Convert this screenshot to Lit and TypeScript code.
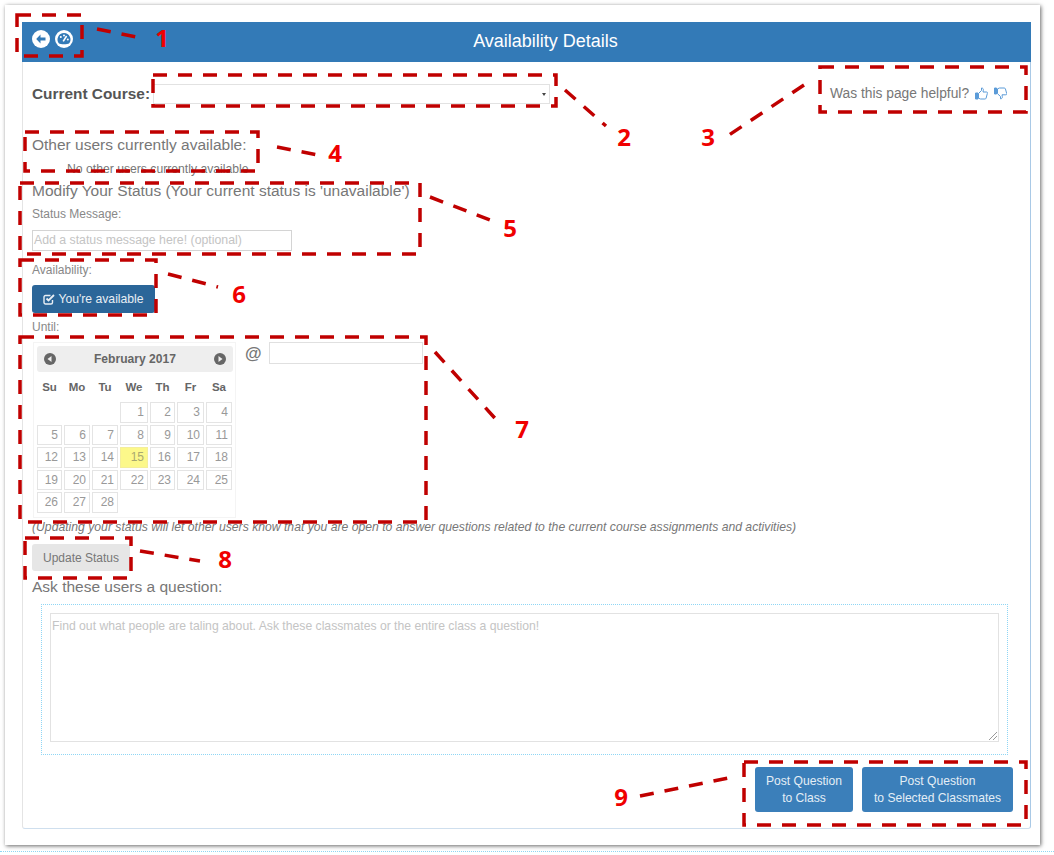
import { LitElement, html, css, svg } from 'lit';
import { customElement } from 'lit/decorators.js';

const BOXES = [
  [17, 15, 65, 41],
  [153, 75, 403, 31],
  [820, 67, 206, 45],
  [25, 132, 233, 39],
  [20, 183, 400, 71],
  [20, 260, 136, 55],
  [20, 337, 406, 185],
  [25, 538, 106, 40],
  [744, 762, 282, 63],
];

const LINES = [
  [97, 29, 136, 37],
  [565, 90, 606, 126],
  [804, 85, 726, 137],
  [277, 147, 318, 155],
  [430, 197, 490, 220],
  [168, 274, 218, 287],
  [435, 352, 502, 426],
  [140, 551, 200, 561],
  [640, 796, 728, 778],
];

const NUMBERS = [
  ['1', 162, 47],
  ['2', 624, 146],
  ['3', 708, 146],
  ['4', 335, 162],
  ['5', 510, 237],
  ['6', 239, 303],
  ['7', 522, 438],
  ['8', 225, 568],
  ['9', 621, 806],
];

// blank cells at the start of the month, then 1..28
const DAYS: number[] = [0, 0, 0, ...Array.from({ length: 28 }, (_, i) => i + 1)];
const WEEKDAYS = ['Su', 'Mo', 'Tu', 'We', 'Th', 'Fr', 'Sa'];

@customElement('app-root')
export class AppRoot extends LitElement {
  static styles = css`
    :host {
      display: block;
      position: relative;
      width: 1054px;
      height: 855px;
      background: #fff;
      overflow: hidden;
      font-family: 'Liberation Sans', Arial, sans-serif;
      color: #777;
    }
    .frame {
      box-sizing: border-box;
      position: relative;
      margin: 5px 0 0 5px;
      width: 1035px;
      height: 840px;
      padding: 17px 9px 16px 17px;
      background: #fff;
      box-shadow: 1px 1px 4px rgba(0, 0, 0, 0.6);
    }
    .rule {
      position: absolute;
      left: -5px;
      right: -14px;
      top: 846px;
      border-top: 1px dotted #8fd6f5;
    }
    .panel {
      box-sizing: border-box;
      height: 100%;
      border: 1px solid #a9c9e6;
      border-top: 0;
      border-left-color: #e4e4e4;
      border-bottom-color: #cfdfee;
      border-radius: 0 0 3px 3px;
    }
    header {
      box-sizing: border-box;
      display: flex;
      align-items: center;
      height: 40px;
      margin: 0 -1px;
      padding: 0 0 6px 10px;
      background: #337ab7;
      position: relative;
    }
    header .icons {
      display: flex;
      gap: 5px;
    }
    header h1 {
      position: absolute;
      left: 38px;
      right: 0;
      top: 9px;
      margin: 0;
      text-align: center;
      font-size: 18px;
      line-height: 20px;
      font-weight: 400;
      color: #fff;
    }
    .body {
      padding: 0 18px 0 9px;
    }
    .top {
      display: flex;
      justify-content: space-between;
      height: 74px;
    }
    .course {
      display: flex;
      align-items: center;
      height: 19px;
      margin-top: 22px;
      gap: 3px;
    }
    .course b {
      font-size: 15.4px;
      color: #555;
    }
    .select {
      box-sizing: border-box;
      position: relative;
      width: 397px;
      height: 20px;
      border: 1px solid #e2e2e2;
    }
    .select::after {
      content: '';
      position: absolute;
      right: 3px;
      top: 8px;
      border: 2px solid transparent;
      border-top: 3px solid #444;
      border-bottom: 0;
    }
    .helpful {
      box-sizing: border-box;
      display: flex;
      align-items: center;
      gap: 5px;
      height: 22px;
      margin: 20px 1px 0 0;
      font-size: 13.8px;
      color: #777;
      width: 181px;
    }
    .helpful svg {
      margin-left: 1px;
      flex: none;
    }
    h2 {
      margin: 0;
      font-size: 15.5px;
      line-height: 18px;
      font-weight: 400;
      color: #777;
    }
    .none {
      font-size: 12.2px;
      line-height: 14px;
      margin: 8px 0 6px 35px;
    }
    .label {
      font-size: 12px;
      line-height: 14px;
      color: #888;
    }
    .status-label {
      margin-top: 7px;
    }
    .status {
      box-sizing: border-box;
      width: 260px;
      height: 21px;
      margin: 9px 0 12px;
      padding-left: 1px;
      border: 1px solid #d4d4d4;
      font-size: 12.3px;
      line-height: 19px;
      color: #c4c4c4;
    }
    .avail {
      display: flex;
      align-items: center;
      justify-content: center;
      gap: 3px;
      box-sizing: border-box;
      width: 123px;
      height: 28px;
      margin: 8px 0 7px;
      border-radius: 3px;
      background: #2b6699;
      color: #e8eef4;
      font-size: 12.2px;
    }
    .until {
      display: flex;
      align-items: flex-start;
      margin-top: 8px;
    }
    .calendar {
      box-sizing: border-box;
      width: 203px;
      height: 176px;
      margin: 0 0 0 1px;
      padding: 3px 0 0 3px;
      border: 1px solid #f4f4f4;
      flex: none;
    }
    .cal-head {
      display: flex;
      align-items: center;
      justify-content: space-between;
      width: 196px;
      height: 26px;
      padding: 0 7px;
      box-sizing: border-box;
      background: #eee;
      border-radius: 3px;
      font-size: 12.1px;
      font-weight: 700;
      color: #666;
    }
    .grid {
      display: grid;
      grid-template-columns: 25px 26px 26px 28px 25px 27px 26px;
      grid-auto-rows: 20.6px;
      column-gap: 2px;
      row-gap: 2px;
      margin-left: 0;
    }
    .week {
      height: 30px;
      align-items: center;
      margin-bottom: 0;
      grid-auto-rows: 30px;
    }
    .week span {
      text-align: center;
      font-size: 11.5px;
      font-weight: 700;
      line-height: 30px;
      color: #666;
    }
    .cell {
      box-sizing: border-box;
      border: 1px solid #e4e4e4;
      padding-right: 3px;
      text-align: right;
      font-size: 12px;
      line-height: 19px;
      color: #999;
    }
    .cell.blank {
      border: 0;
    }
    .cell.today {
      background: #fcf88a;
      border-color: #f4ee9a;
      color: #a8a870;
    }
    .at {
      margin: 0 7px 0 9px;
      font-size: 17px;
      font-weight: 700;
      line-height: 24px;
      color: #777;
    }
    .time {
      box-sizing: border-box;
      width: 154px;
      height: 22px;
      border: 1px solid #e0e0e0;
    }
    .note {
      margin-top: 2px;
      font-size: 12.2px;
      line-height: 14px;
      font-style: italic;
      color: #777;
    }
    .update {
      display: flex;
      align-items: center;
      justify-content: center;
      width: 98px;
      height: 27px;
      margin: 10px 0 7px;
      border-radius: 3px;
      background: #e6e6e6;
      font-size: 12px;
      color: #777;
    }
    .ask-box {
      box-sizing: border-box;
      width: 967px;
      height: 151px;
      margin: 8px 0 0 9px;
      padding: 8px;
      border: 1px dotted #8fd6f5;
    }
    .ask {
      box-sizing: border-box;
      position: relative;
      width: 949px;
      height: 129px;
      padding: 5px 1px;
      border: 1px solid #e2e2e2;
      font-size: 12.2px;
      color: #c4c4c4;
    }
    .ask svg {
      position: absolute;
      right: 1px;
      bottom: 1px;
    }
    .actions {
      display: flex;
      justify-content: flex-end;
      gap: 9px;
      margin: 12px -1px 0 0;
    }
    .post {
      display: flex;
      align-items: center;
      justify-content: center;
      box-sizing: border-box;
      height: 45px;
      border-radius: 3px;
      background: #3b7fba;
      color: #e4eef6;
      font-size: 12.1px;
      line-height: 17px;
      text-align: center;
    }
    .post.one {
      width: 98px;
    }
    .post.two {
      width: 151px;
    }
    .marks {
      position: absolute;
      left: 0;
      top: 0;
      pointer-events: none;
    }
    .marks rect,
    .marks line {
      fill: none;
      stroke: #c00000;
      stroke-width: 3.5;
      stroke-dasharray: 14 11;
    }
    .marks text {
      font-family: 'Open Sans', sans-serif;
      font-size: 24px;
      font-weight: 700;
      fill: #f00000;
      text-anchor: middle;
    }
  `;

  private renderNav(dir: 'left' | 'right') {
    const points = dir === 'left' ? '7.5,3 3.5,6 7.5,9' : '4.5,3 8.5,6 4.5,9';
    return html`<svg width="12" height="12" viewBox="0 0 12 12">
      <circle cx="6" cy="6" r="6" fill="#666"></circle>
      <polygon points=${points} fill="#eee"></polygon>
    </svg>`;
  }

  render() {
    return html`
      <div class="frame">
        <div class="rule"></div>
        <div class="panel">
          <header>
            <div class="icons">
              <svg width="18" height="18" viewBox="0 0 18 18">
                <circle cx="9" cy="9" r="9" fill="#fff"></circle>
                <path d="M8.5 4.6 4.2 9l4.3 4.4V10.600h5V7.400h-5z" fill="#337ab7"></path>
              </svg>
              <svg width="18" height="18" viewBox="0 0 18 18">
                <circle cx="9" cy="9" r="9" fill="#fff"></circle>
                <path d="M9 3a6.5 6.5 0 0 0-5 10.600c1.300 1 8.700 1 10 0A6.500 6.500 0 0 0 9 3z" fill="#337ab7"></path>
                <path d="M8.2 11.400 11.600 6" stroke="#fff" stroke-width="1.6"></path>
                <circle cx="5.8" cy="7" r="1" fill="#fff"></circle>
                <circle cx="9" cy="5.4" r="1" fill="#fff"></circle>
                <circle cx="12.8" cy="9.4" r="1" fill="#fff"></circle>
              </svg>
            </div>
            <h1>Availability Details</h1>
          </header>
          <div class="body">
            <div class="top">
              <div class="course">
                <b>Current Course:</b>
                <div class="select"></div>
              </div>
              <div class="helpful">
                <span>Was this page helpful?</span>
                <svg width="13" height="13" viewBox="0 0 13 13" fill="none" stroke="#5b9bd8" stroke-width="1">
                  <path d="M.5 6h2.5v6H.5z" fill="#5b9bd8"></path>
                  <path d="M3.5 6.500 6.500 3.500V1c1.500 0 2 1 1.800 2.200L8 5h3.600c1 0 1 1 .7 1.600l-1.200 4.600c-.2.6-.6.8-1.200.8H5.500L3.500 11.200z"></path>
                </svg>
                <svg width="13" height="13" viewBox="0 0 13 13" fill="none" stroke="#5b9bd8" stroke-width="1">
                  <path d="M.5 1h2v6h-2z" fill="#5b9bd8"></path>
                  <path d="M3.5 1.800 5.500 1h4.700c.6 0 1 .2 1.200.8l1.200 4.400c.3.7.3 1.600-.7 1.600H8l.3 1.800c.2 1.200-.3 2.200-1.800 2.200V9.500l-3-2.800z"></path>
                </svg>
              </div>
            </div>
            <h2>Other users currently available:</h2>
            <div class="none">No other users currently available</div>
            <h2>Modify Your Status (Your current status is 'unavailable')</h2>
            <div class="label status-label">Status Message:</div>
            <div class="status">Add a status message here! (optional)</div>
            <div class="label">Availability:</div>
            <div class="avail">
              <svg width="12" height="12" viewBox="0 0 12 12" fill="none" stroke="#e8eef4" stroke-width="1.4">
                <path d="M9.5 7v2.500a1.500 1.500 0 0 1-1.500 1.500H2.500A1.500 1.500 0 0 1 1 9.500V4a1.500 1.500 0 0 1 1.500-1.500H7.500"></path>
                <path d="M3.5 5.500 5.500 7.500 11 2" stroke-width="1.8"></path>
              </svg>
              You're available
            </div>
            <div class="label">Until:</div>
            <div class="until">
              <div class="calendar">
                <div class="cal-head">
                  ${this.renderNav('left')}
                  <span>February 2017</span>
                  ${this.renderNav('right')}
                </div>
                <div class="grid week">
                  ${WEEKDAYS.map((d) => html`<span>${d}</span>`)}
                </div>
                <div class="grid">
                  ${DAYS.map((d) =>
                    d === 0
                      ? html`<div class="cell blank"></div>`
                      : html`<div class="cell ${d === 15 ? 'today' : ''}">${d}</div>`
                  )}
                </div>
              </div>
              <div class="at">@</div>
              <div class="time"></div>
            </div>
            <div class="note">
              (Updating your status will let other users know that you are open to answer questions related to the
              current course assignments and activities)
            </div>
            <div class="update">Update Status</div>
            <h2>Ask these users a question:</h2>
            <div class="ask-box">
              <div class="ask">
                Find out what people are taling about. Ask these classmates or the entire class a question!
                <svg width="8" height="8" viewBox="0 0 8 8" stroke="#999" stroke-width="1">
                  <path d="M0 8 8 0M4 8l4-4"></path>
                </svg>
              </div>
            </div>
            <div class="actions">
              <div class="post one">Post Question<br />to Class</div>
              <div class="post two">Post Question<br />to Selected Classmates</div>
            </div>
          </div>
        </div>
      </div>
      <svg class="marks" width="1054" height="855">
        ${BOXES.map(([x, y, w, h]) => svg`<rect x=${x} y=${y} width=${w} height=${h}></rect>`)}
        ${LINES.map(([x1, y1, x2, y2]) => svg`<line x1=${x1} y1=${y1} x2=${x2} y2=${y2}></line>`)}
        ${NUMBERS.map(([t, x, y]) => svg`<text x=${x} y=${y}>${t}</text>`)}
      </svg>
    `;
  }
}
